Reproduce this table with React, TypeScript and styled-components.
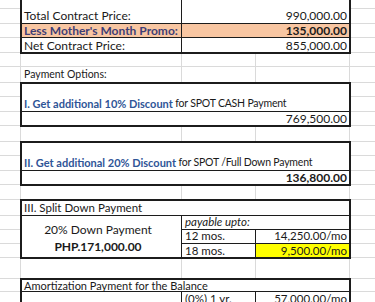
import React from 'react';
import styled, { createGlobalStyle } from 'styled-components';

const GRID = '#dadada';
const INK = '#1c1c1c';

const GlobalStyle = createGlobalStyle`
  html, body {
    margin: 0;
    padding: 0;
    background: #fff;
  }
  body {
    font-family: Lato, 'Liberation Sans', sans-serif;
    font-size: 12px;
    color: #1a1a1a;
    overflow: hidden;
  }
`;

const Sheet = styled.div`
  margin-top: -12px;
  display: flex;
  flex-direction: column;
`;

const Band = styled.div`
  display: grid;
  grid-template-columns: 21px 329px 1fr;
`;

const Gutter = styled.div<{ $left?: boolean }>`
  display: flex;
  flex-direction: column;
  box-sizing: border-box;
  border-right: ${(p) => (p.$left ? `1px solid ${GRID}` : 'none')};
`;

const GutterCell = styled.div<{ $h: number }>`
  height: ${(p) => p.$h}px;
  box-sizing: border-box;
  border-bottom: 1px solid ${GRID};
`;

const GapRow = styled.div<{ $h: number }>`
  display: grid;
  grid-template-columns: 161px 74px 94px;
  height: ${(p) => p.$h}px;
`;

const GapCell = styled.div`
  display: flex;
  align-items: flex-end;
  box-sizing: border-box;
  padding: 0 3px 1px;
  border-right: 1px solid ${GRID};
  border-bottom: 1px solid ${GRID};
  white-space: nowrap;
  font-size: 10.5px;
  line-height: 14px;
`;

const Box = styled.div`
  position: relative;
  z-index: 1;
  background: #fff;
  outline: 2px solid ${INK};
  outline-offset: -1px;
  display: flex;
  flex-direction: column;
`;

const BoxRow = styled.div<{ $h: number; $cols?: string; $fill?: string; $last?: boolean }>`
  display: grid;
  grid-template-columns: ${(p) => p.$cols || '1fr'};
  height: ${(p) => p.$h}px;
  box-sizing: border-box;
  background: ${(p) => p.$fill || 'transparent'};
  border-bottom: ${(p) => (p.$last ? 'none' : `1px solid ${INK}`)};
`;

const Cell = styled.div<{
  $align?: 'left' | 'right';
  $divider?: boolean;
  $bold?: boolean;
  $italic?: boolean;
  $fill?: string;
  $color?: string;
  $size?: number;
}>`
  display: flex;
  align-items: flex-end;
  justify-content: ${(p) => (p.$align === 'right' ? 'flex-end' : 'flex-start')};
  box-sizing: border-box;
  padding: 0 3px 1px;
  font-size: ${(p) => p.$size || 12}px;
  line-height: 13px;
  white-space: nowrap;
  font-weight: ${(p) => (p.$bold ? 700 : 400)};
  font-style: ${(p) => (p.$italic ? 'italic' : 'normal')};
  color: ${(p) => p.$color || 'inherit'};
  background: ${(p) => p.$fill || 'transparent'};
  border-right: ${(p) => (p.$divider ? `1px solid ${INK}` : 'none')};
`;

const Accent = styled.span`
  color: #2f5597;
  font-weight: 700;
  white-space: pre;
`;

const Plain = styled.span`
  white-space: pre;
  font-size: 10.5px;
  letter-spacing: -0.2px;
`;

const SplitGrid = styled.div`
  display: grid;
  grid-template-columns: 161px 74px 1fr;
  grid-template-rows: 14px 14px 14px;
`;

const MergedCell = styled.div`
  grid-row: 1 / span 3;
  display: flex;
  flex-direction: column;
  align-items: center;
  justify-content: center;
  padding: 1px 6px 0 0;
  border-right: 1px solid ${INK};
  font-size: 12px;
  line-height: 17px;
`;

const SplitCell = styled(Cell)<{ $rule?: boolean; $span?: boolean }>`
  grid-column: ${(p) => (p.$span ? 'span 2' : 'auto')};
  border-bottom: ${(p) => (p.$rule ? `1px solid ${INK}` : 'none')};
`;

const Strong = styled.span`
  font-weight: 700;
`;

const Gutters: React.FC<{ rows: number[]; left?: boolean }> = ({ rows, left }) => (
  <Gutter $left={left}>
    {rows.map((h, i) => (
      <GutterCell key={i} $h={h} />
    ))}
  </Gutter>
);

const SheetBand: React.FC<{ rows: number[]; children: React.ReactNode }> = ({ rows, children }) => (
  <Band>
    <Gutters rows={rows} left />
    {children}
    <Gutters rows={rows} />
  </Band>
);

const Gap: React.FC<{ rows: number[]; label?: string }> = ({ rows, label }) => (
  <SheetBand rows={rows}>
    <div>
      {rows.map((h, i) => (
        <GapRow key={i} $h={h}>
          <GapCell>{i === rows.length - 1 ? label : null}</GapCell>
          <GapCell />
          <GapCell />
        </GapRow>
      ))}
    </div>
  </SheetBand>
);

const App: React.FC = () => {
  const totalsCols = '161px 1fr';

  return (
    <>
      <GlobalStyle />
      <Sheet>
        <SheetBand rows={[21, 15, 14, 15]}>
          <Box>
            <BoxRow $h={36} $cols={totalsCols}>
              <Cell $divider>Total Contract Price:</Cell>
              <Cell $align="right">990,000.00</Cell>
            </BoxRow>
            <BoxRow $h={14} $cols={totalsCols} $fill="#f8c6a2">
              <Cell $divider $bold $color="#3f3f76">Less Mother's Month Promo:</Cell>
              <Cell $align="right" $bold>135,000.00</Cell>
            </BoxRow>
            <BoxRow $h={15} $cols={totalsCols} $last>
              <Cell $divider>Net Contract Price:</Cell>
              <Cell $align="right">855,000.00</Cell>
            </BoxRow>
          </Box>
        </SheetBand>

        <Gap rows={[14, 16]} label="Payment Options:" />

        <SheetBand rows={[14, 15, 14]}>
          <Box>
            <BoxRow $h={29}>
              <Cell $size={11}>
                <Accent>I. Get additional 10% Discount</Accent>
                <Plain> for SPOT CASH Payment</Plain>
              </Cell>
            </BoxRow>
            <BoxRow $h={14} $last>
              <Cell $align="right">769,500.00</Cell>
            </BoxRow>
          </Box>
        </SheetBand>

        <Gap rows={[16]} />

        <SheetBand rows={[14, 15, 14]}>
          <Box>
            <BoxRow $h={29}>
              <Cell $size={11}>
                <Accent>II. Get additional 20% Discount</Accent>
                <Plain> for SPOT /Full Down Payment</Plain>
              </Cell>
            </BoxRow>
            <BoxRow $h={14} $last>
              <Cell $align="right" $bold>136,800.00</Cell>
            </BoxRow>
          </Box>
        </SheetBand>

        <Gap rows={[15]} />

        <SheetBand rows={[16, 14, 14, 14]}>
          <Box>
            <BoxRow $h={16}>
              <Cell $size={11.5}>III. Split Down Payment</Cell>
            </BoxRow>
            <SplitGrid>
              <MergedCell>
                <span>20% Down Payment</span>
                <Strong>PHP.171,000.00</Strong>
              </MergedCell>
              <SplitCell $span $rule $italic $size={11.5}>payable upto:</SplitCell>
              <SplitCell $rule $divider $size={11.5}>12 mos.</SplitCell>
              <SplitCell $rule $align="right" $size={11.5}>14,250.00/mo</SplitCell>
              <SplitCell $divider $size={11.5}>18 mos.</SplitCell>
              <SplitCell $align="right" $fill="#ffff00" $size={11.5}>9,500.00/mo</SplitCell>
            </SplitGrid>
          </Box>
        </SheetBand>

        <Gap rows={[21]} />

        <SheetBand rows={[13, 14]}>
          <Box>
            <BoxRow $h={13}>
              <Cell $size={11}>Amortization Payment for the Balance</Cell>
            </BoxRow>
            <BoxRow $h={14} $cols="161px 74px 1fr" $last>
              <Cell $divider />
              <Cell $divider $size={11.5}>(0%) 1 yr.</Cell>
              <Cell $align="right" $size={11.5}>57,000.00/mo</Cell>
            </BoxRow>
          </Box>
        </SheetBand>
      </Sheet>
    </>
  );
};

export default App;
